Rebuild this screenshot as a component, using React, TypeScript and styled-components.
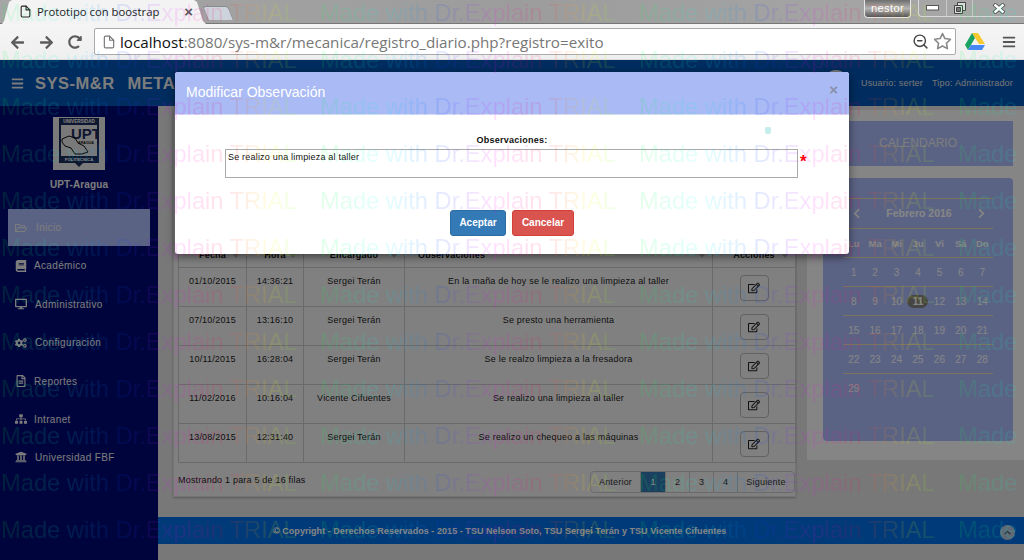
import React from "react";
import styled, { createGlobalStyle } from "styled-components";
import { FaRegFolderOpen, FaBook, FaDesktop, FaCogs, FaRegFileAlt, FaSitemap, FaUniversity, FaRegEdit, FaBars, FaChevronLeft, FaChevronRight, FaChevronUp, FaArrowLeft, FaArrowRight, FaRedoAlt } from "react-icons/fa";
import { FiFile, FiStar, FiZoomOut } from "react-icons/fi";

const Global = createGlobalStyle`
  html, body { margin: 0; padding: 0; width: 1024px; height: 560px; overflow: hidden; background: #eee; font-family: "Liberation Sans", Arial, sans-serif; }
  * { box-sizing: border-box; }
`;

const Screen = styled.div`position: relative; width: 1024px; height: 560px; overflow: hidden; display: flex; flex-direction: column;`;
const TabStrip = styled.div`height: 24px; flex: none; display: flex; align-items: flex-end; background: linear-gradient(90deg,#a6a6a6,#9c9c9c 50%,#a8a8a8); border-bottom: 1px solid #777; justify-content: space-between;`;
const TabGroup = styled.div`display: flex; align-items: flex-end;`;
const ActiveTab = styled.div`width: 204px; height: 24px; margin-left: 2px; margin-bottom: -1px; background: #f3f3f3; clip-path: polygon(0 100%, 2px 88%, 7px 8%, 10px 0, 192px 0, 195px 8%, 201px 88%, 204px 100%); display: flex; align-items: center; padding: 0 13px 2px 17px; font: 11.3px "Open Sans", "Liberation Sans", sans-serif; color: #222; gap: 5px;`;
const TabTitle = styled.span`flex: 1;`;
const TabClose = styled.span`font: bold 15px "Liberation Sans", sans-serif; color: #5a5a5a;`;
const NewTab = styled.div`width: 26px; height: 14px; margin: 0 0 3px -1px; background: #cdd3dc; border-radius: 3px 3px 0 0; border: 1px solid #8a8a8a; border-bottom: 0; transform: skewX(22deg);`;
const WinControls = styled.div`display: flex; align-items: flex-start; align-self: flex-start; gap: 7px;`;
const UserBadge = styled.div`width: 47px; height: 18px; border: 1px solid #e6e6e6; border-top: 0; border-radius: 0 0 4px 4px; background: linear-gradient(#6e6e6e,#b4b4b4 50%,#555); color: #fff; font-size: 11px; text-align: center; line-height: 16px; letter-spacing: .4px;`;
const WinButtons = styled.div`width: 106px; height: 17px; display: flex; border: 1px solid #d8d8d8; border-top: 0; border-right: 0; border-radius: 0 0 0 4px;`;
const WinButton = styled.div<{ $w: number }>`width: ${(p) => p.$w}px; border-right: 1px solid #c8c8c8; display: flex; align-items: center; justify-content: center; &:last-child { border-right: 0; }`;
const Toolbar = styled.div`height: 36px; flex: none; background: linear-gradient(#f5f5f5,#efefef); display: flex; align-items: center; padding: 0 8px 0 10px; color: #5c5c5c; border-bottom: 1px solid #ddd;`;
const NavIcons = styled.div`display: flex; gap: 14px; width: 84px; align-items: center; margin-top: 1px;`;
const Omnibox = styled.div`flex: 1; height: 27px; background: #fff; border: 1px solid #aaa; border-radius: 2px; display: flex; align-items: center; padding: 0 3px 0 7px; font: 15.2px "Open Sans", "Liberation Sans", sans-serif; color: #777;`;
const Host = styled.span`color: #111;`;
const UrlText = styled.span`flex: 1; margin-left: 4px; white-space: nowrap;`;
const ToolRight = styled.div`display: flex; width: 60px; justify-content: space-between; align-items: center; padding-left: 9px;`;

const Page = styled.div`position: relative; flex: 1; display: flex; flex-direction: column; background: #e6e6e6; overflow: hidden;`;
const TopNav = styled.div`height: 46px; flex: none; background: #0055b7; display: flex; align-items: center; padding: 0 11px 0 11px; justify-content: space-between;`;
const Brand = styled.div`display: flex; align-items: center; gap: 11px; font-size: 16.5px; font-weight: bold; letter-spacing: .5px; color: #f0f0f0;`;
const BrandSub = styled.span`margin-left: 2px;`;
const UserInfo = styled.div`display: flex; align-items: center; gap: 9px; font-size: 9px; letter-spacing: .2px; color: #e0e0e0;`;
const Avatar = styled.div`width: 26px; height: 26px; border-radius: 50%; background: #e8e8e8; margin-right: 3px;`;
const Body = styled.div`flex: 1; display: flex; min-height: 0;`;
const Sidebar = styled.aside`width: 158px; flex: none; background: #000874; display: flex; flex-direction: column; padding-top: 11px; color: #eee;`;
const Logo = styled.div`width: 52px; height: 53px; margin-left: 53px; background: #eaeaea; padding: 1px 6px;`;
const Campus = styled.div`text-align: center; font-size: 10px; font-weight: bold; margin: 8px 0 0; line-height: 14px; height: 31px; letter-spacing: .1px;`;
const Menu = styled.div`display: flex; flex-direction: column;`;
const MenuItem = styled.div<{ $active?: boolean; $gap: number; $h: number; $pad?: number }>`display: flex; align-items: center; height: ${(p) => p.$h}px; margin-left: 8px; width: 142px; padding-left: ${(p) => p.$pad ?? 7}px; gap: ${(p) => p.$gap}px; font-size: 10px; letter-spacing: .35px; background: ${(p) => (p.$active ? "#afbfff" : "transparent")}; svg { font-size: 12px; flex: none; }`;

const Main = styled.main`flex: 1; display: flex; flex-direction: column; min-width: 0;`;
const Content = styled.div`flex: 1; display: flex; padding: 4px 0 0 15px; gap: 11px; min-height: 0;`;
const TablePanel = styled.section`width: 623px; height: 387px; background: #f6f6f6; border: 1px solid #ddd; box-shadow: 0 1px 2px rgba(0,0,0,.25); padding: 0 0 0 4px; display: flex; flex-direction: column;`;
const HeadSpacer = styled.div`height: 131px; flex: none;`;
const DataTable = styled.table`width: 617px; border-collapse: collapse; table-layout: fixed; font-size: 9px; letter-spacing: .2px; color: #222;`;
const Th = styled.th<{ $w: number; $left?: boolean }>`position: relative; width: ${(p) => p.$w}px; height: 25px; border: 1px solid #ccc; font-weight: bold; padding: 0 0 0 ${(p) => (p.$left ? "13px" : "0")}; text-align: ${(p) => (p.$left ? "left" : "center")}; color: #111; &::after { content: ""; position: absolute; right: 6px; top: 10px; border: 4px solid transparent; border-top: 5px solid #bbb; }`;
const Td = styled.td`height: 39px; border: 1px solid #ccc; text-align: center; vertical-align: top; padding-top: 8px;`;
const EditButton = styled.div`width: 29px; height: 26px; margin: 0 auto; border: 1px solid #bbb; border-radius: 4px; display: flex; align-items: center; justify-content: center; font-size: 12px; color: #222;`;
const ActionTd = styled(Td)`padding-top: 7px;`;
const TableFoot = styled.div`display: flex; justify-content: space-between; padding-top: 8px; font-size: 9px; color: #222; letter-spacing: .2px;`;
const FootCount = styled.span`padding-top: 4px;`;
const Pager = styled.div`display: flex; height: 22px; border: 1px solid #ccc; border-radius: 4px; color: #333;`;
const PagerCell = styled.div<{ $w: number; $active?: boolean }>`width: ${(p) => p.$w}px; display: flex; align-items: center; justify-content: center; border-right: 1px solid #ccc; background: ${(p) => (p.$active ? "#337ab7" : "transparent")}; color: ${(p) => (p.$active ? "#fff" : "#333")}; &:last-child { border-right: 0; }`;
const CalendarCol = styled.aside`width: 217px; height: 350px; background: #fff; padding: 11px 11px 0 16px; display: flex; flex-direction: column; gap: 12px;`;
const CalTitle = styled.div`height: 45px; background: #afbfff; display: flex; align-items: center; justify-content: center; color: #eee; font-size: 12px; width: 190px; padding-bottom: 2px;`;
const CalBox = styled.div`height: 263px; width: 190px; border-radius: 4px; background: #afbfff; color: #fff; padding: 20px 20px 0; font-size: 10px;`;
const CalHead = styled.div`height: 31px; border-top: 1px solid #eadfbb; border-bottom: 1px solid #eadfbb; display: flex; justify-content: space-between; align-items: center; font-weight: bold; font-size: 10.5px; padding: 0 6px 1px 8px;`;
const CalRow = styled.div<{ $h: number }>`display: grid; grid-template-columns: repeat(7, 1fr); height: ${(p) => p.$h}px; border-bottom: 1px solid #eadfbb; align-items: center; text-align: center; &:last-child { border-bottom: 0; }`;
const CalHeadCell = styled.span`font-weight: bold; font-size: 9.5px;`;
const CalDay = styled.span<{ $today?: boolean }>`justify-self: center; min-width: 20px; font-size: 10px; ${(p) => p.$today && "background:#858580;border-radius:7px;height:13px;line-height:13px;font-weight:bold;color:#fff;width:21px;"}`;
const Footer = styled.footer`height: 27px; flex: none; margin-top: auto; margin-bottom: 16px; background: #0070e7; color: #fff; position: relative; display: flex; align-items: center; font-size: 9px; font-weight: bold; letter-spacing: .05px; padding-left: 115px;`;
const ToTop = styled.div`position: absolute; right: 9px; top: 8px; width: 15px; height: 15px; border-radius: 50%; background: #b8c8e0; display: flex; align-items: center; justify-content: center; font-size: 7px; color: #445;`;

const Backdrop = styled.div`position: absolute; inset: 0; background: rgba(0,0,0,.48);`;
const Modal = styled.div`position: absolute; left: 175px; top: 12px; width: 674px; height: 182px; background: #fff; border-radius: 3px; box-shadow: 0 3px 9px rgba(0,0,0,.5); display: flex; flex-direction: column; overflow: hidden;`;
const ModalHeader = styled.div`height: 43px; flex: none; background: #a9baf5; border-bottom: 1px solid #d5dcf5; display: flex; justify-content: space-between; align-items: center; padding: 0 11px 2px; color: #fff; font-size: 14px;`;
const ModalClose = styled.span`color: #8a8fa6; font-size: 15px; font-weight: bold; margin-top: -6px;`;
const ModalBody = styled.div`flex: 1; position: relative; display: flex; flex-direction: column; align-items: center; padding-top: 20px;`;
const FieldLabel = styled.label`font-size: 9px; font-weight: bold; letter-spacing: .25px; color: #111; height: 14px;`;
const FieldRow = styled.div`position: relative; width: 573px; margin-left: -1px;`;
const FieldBox = styled.div`height: 29px; border: 1px solid #aaa; padding: 2px 2px; font-size: 9px; letter-spacing: .2px; color: #111;`;
const Required = styled.span`position: absolute; left: 575px; top: 4px; color: #f00; font-size: 17px; line-height: 17px; font-weight: bold;`;
const Dot = styled.span`position: absolute; left: 590px; top: 12px; width: 6px; height: 7px; border-radius: 2px; background: #c4eeea;`;
const Buttons = styled.div`display: flex; gap: 6px; margin-top: 32px;`;
const Btn = styled.button<{ $bg: string; $bd: string; $w: number }>`width: ${(p) => p.$w}px; height: 26px; border: 1px solid ${(p) => p.$bd}; border-radius: 3px; background: ${(p) => p.$bg}; color: #fff; font: bold 10px "Liberation Sans", Arial, sans-serif; padding: 0 0 2px;`;

const Watermark = styled.div`position: absolute; inset: 0; pointer-events: none; display: flex; flex-direction: column; overflow: hidden; opacity: .11;`;
const WmRow = styled.div`height: 47px; flex: none; display: flex; white-space: nowrap;`;
const WmText = styled.span`width: 319px; flex: none; padding-left: 1px; font-size: 23.7px; line-height: 27px; background: linear-gradient(90deg,#00ff40 0,#00ffff 20%,#0040ff 38%,#ff00ff 55%,#ff0040 70%,#ffff00 85%,#00ff40 100%); -webkit-background-clip: text; background-clip: text; color: transparent;`;

const rows = [
  ["01/10/2015","14:36:21","Sergei Terán","En la maña de hoy se le realizo una limpieza al taller"],
  ["07/10/2015","13:16:10","Sergei Terán","Se presto una herramienta"],
  ["10/11/2015","16:28:04","Sergei Terán","Se le realzo limpieza a la fresadora"],
  ["11/02/2016","10:16:04","Vicente Cifuentes","Se realizo una limpieza al taller"],
  ["13/08/2015","12:31:40","Sergei Terán","Se realizo un chequeo a las máquinas"],
];
const weeks = [["1","2","3","4","5","6","7"],["8","9","10","11","12","13","14"],["15","16","17","18","19","20","21"],["22","23","24","25","26","27","28"],["29"]];

const LogoArt = () => (
  <svg viewBox="0 0 40 51" width="40" height="51">
    <path d="M0 0H40V45H24L20 49L16 45H0Z" fill="#1c2c5c" />
    <rect x="2" y="7" width="36" height="31" fill="#e8e8e8" />
    <text x="20" y="5.4" fontSize="4.6" fontWeight="bold" fill="#fff" textAnchor="middle" fontFamily="Liberation Sans">UNIVERSIDAD</text>
    <text x="27" y="21" fontSize="15" fontWeight="bold" fill="#1c2c5c" textAnchor="middle" fontFamily="Liberation Sans">UPT</text>
    <text x="27" y="26" fontSize="3.6" fontWeight="bold" fill="#111" textAnchor="middle" fontFamily="Liberation Sans">ARAGUA</text>
    <path d="M3 21l7-3 6 2 3 5 6 3 4 6-6 2-7 0-4-6-6-2-3-4z" fill="none" stroke="#111" strokeWidth="1" />
    <text x="20" y="43.4" fontSize="4.2" fontWeight="bold" fill="#fff" textAnchor="middle" fontFamily="Liberation Sans">POLITECNICA</text>
  </svg>
);
const DriveIcon = () => (
  <svg viewBox="0 0 20 18" width="20" height="18">
    <path d="M7 0h6l7 11h-6z" fill="#f8c92e" /><path d="M7 0L0 12l3 5 7-12z" fill="#1aa260" /><path d="M6 12h14l-3 5H3z" fill="#4688f4" />
  </svg>
);
const MinimizeIcon = () => (
  <svg viewBox="0 0 13 6" width="13" height="6"><rect x=".5" y=".5" width="12" height="4.5" fill="#fff" stroke="#555" /></svg>
);
const RestoreIcon = () => (
  <svg viewBox="0 0 12 12" width="12" height="12"><path d="M3.5.5h8v8h-8z" fill="#ddd" stroke="#444" /><path d="M.5 3.5h8v8h-8z" fill="#ddd" stroke="#444" /><path d="M2.5 5.5h4v4h-4z" fill="#777" stroke="#444" /></svg>
);
const CloseIcon = () => (
  <svg viewBox="0 0 14 11" width="14" height="11"><path d="M2 1l10 9M12 1L2 10" stroke="#444" strokeWidth="4" /><path d="M2.5 1.5l9 8M11.5 1.5l-9 8" stroke="#fff" strokeWidth="2.4" /></svg>
);

export default function App() {
  return (
    <Screen>
      <Global />
      <TabStrip>
        <TabGroup>
          <ActiveTab><FiFile size={13} /><TabTitle>Prototipo con boostrap</TabTitle><TabClose>×</TabClose></ActiveTab>
          <NewTab />
        </TabGroup>
        <WinControls>
          <UserBadge>nestor</UserBadge>
          <WinButtons><WinButton $w={28}><MinimizeIcon /></WinButton><WinButton $w={27}><RestoreIcon /></WinButton><WinButton $w={51}><CloseIcon /></WinButton></WinButtons>
        </WinControls>
      </TabStrip>
      <Toolbar>
        <NavIcons><FaArrowLeft size={15} /><FaArrowRight size={15} /><FaRedoAlt size={14} /></NavIcons>
        <Omnibox>
          <FiFile size={14} color="#777" />
          <UrlText><Host>localhost</Host>:8080/sys-m&amp;r/mecanica/registro_diario.php?registro=exito</UrlText>
          <FiZoomOut size={17} color="#444" /><FiStar size={19} color="#888" style={{ marginLeft: 4 }} />
        </Omnibox>
        <ToolRight><DriveIcon /><FaBars size={14} color="#555" /></ToolRight>
      </Toolbar>
      <Page>
        <TopNav>
          <Brand><FaBars size={13} /><span>SYS-M&amp;R</span><BrandSub>METAL</BrandSub></Brand>
          <UserInfo><Avatar /><span>Usuario: serter</span><span>Tipo: Administrador</span></UserInfo>
        </TopNav>
        <Body>
          <Sidebar>
            <Logo><LogoArt /></Logo>
            <Campus>UPT-Aragua</Campus>
            <Menu>
              <MenuItem $active $gap={9} $h={37}><FaRegFolderOpen />Inicio</MenuItem>
              <MenuItem $gap={7} $h={39} $pad={7}><FaBook />Académico</MenuItem>
              <MenuItem $gap={8} $h={38}><FaDesktop />Administrativo</MenuItem>
              <MenuItem $gap={8} $h={39}><FaCogs />Configuración</MenuItem>
              <MenuItem $gap={7} $h={38} $pad={7}><FaRegFileAlt />Reportes</MenuItem>
              <MenuItem $gap={7} $h={38}><FaSitemap />Intranet</MenuItem>
              <MenuItem $gap={8} $h={38}><FaUniversity />Universidad FBF</MenuItem>
            </Menu>
          </Sidebar>
          <Main>
            <Content>
              <TablePanel>
                <HeadSpacer />
                <DataTable>
                  <thead><tr><Th $w={68}>Fecha</Th><Th $w={57}>Hora</Th><Th $w={101}>Encargado</Th><Th $w={308} $left>Observaciones</Th><Th $w={83}>Acciones</Th></tr></thead>
                  <tbody>
                    {rows.map((r) => (
                      <tr key={r[0]}>
                        {r.map((c) => <Td key={c}>{c}</Td>)}
                        <ActionTd><EditButton><FaRegEdit /></EditButton></ActionTd>
                      </tr>
                    ))}
                  </tbody>
                </DataTable>
                <TableFoot>
                  <FootCount>Mostrando 1 para 5 de 16 filas</FootCount>
                  <Pager>
                    <PagerCell $w={50}>Anterior</PagerCell><PagerCell $w={25} $active>1</PagerCell><PagerCell $w={24}>2</PagerCell><PagerCell $w={24}>3</PagerCell><PagerCell $w={24}>4</PagerCell><PagerCell $w={56}>Siguiente</PagerCell>
                  </Pager>
                </TableFoot>
              </TablePanel>
              <CalendarCol>
                <CalTitle>CALENDARIO</CalTitle>
                <CalBox>
                  <CalHead><FaChevronLeft size={11} /><span>Febrero 2016</span><FaChevronRight size={11} /></CalHead>
                  <CalRow $h={29}>{["Lu","Ma","Mi","Ju","Vi","Sá","Do"].map((d) => <CalHeadCell key={d}>{d}</CalHeadCell>)}</CalRow>
                  {weeks.map((w) => (
                    <CalRow key={w[0]} $h={29}>{w.map((d) => <CalDay key={d} $today={d === "11"}>{d}</CalDay>)}</CalRow>
                  ))}
                </CalBox>
              </CalendarCol>
            </Content>
            <Footer>© Copyright - Derechos Reservados - 2015 - TSU Nelson Soto, TSU Sergei Terán y TSU Vicente Cifuentes<ToTop><FaChevronUp /></ToTop></Footer>
          </Main>
        </Body>
        <Backdrop />
        <Modal>
          <ModalHeader>Modificar Observación<ModalClose>×</ModalClose></ModalHeader>
          <ModalBody>
            <FieldLabel>Observaciones:</FieldLabel>
            <FieldRow>
              <FieldBox>Se realizo una limpieza al taller</FieldBox>
              <Required>*</Required>
            </FieldRow>
            <Dot />
            <Buttons>
              <Btn $bg="#337ab7" $bd="#2e6da4" $w={56}>Aceptar</Btn>
              <Btn $bg="#d9534f" $bd="#d43f3a" $w={62}>Cancelar</Btn>
            </Buttons>
          </ModalBody>
        </Modal>
      </Page>
      <Watermark>
        {Array.from({ length: 12 }, (_, i) => (
          <WmRow key={i}>
            {Array.from({ length: 4 }, (_, j) => <WmText key={j}>Made with Dr.Explain TRIAL</WmText>)}
          </WmRow>
        ))}
      </Watermark>
    </Screen>
  );
}
